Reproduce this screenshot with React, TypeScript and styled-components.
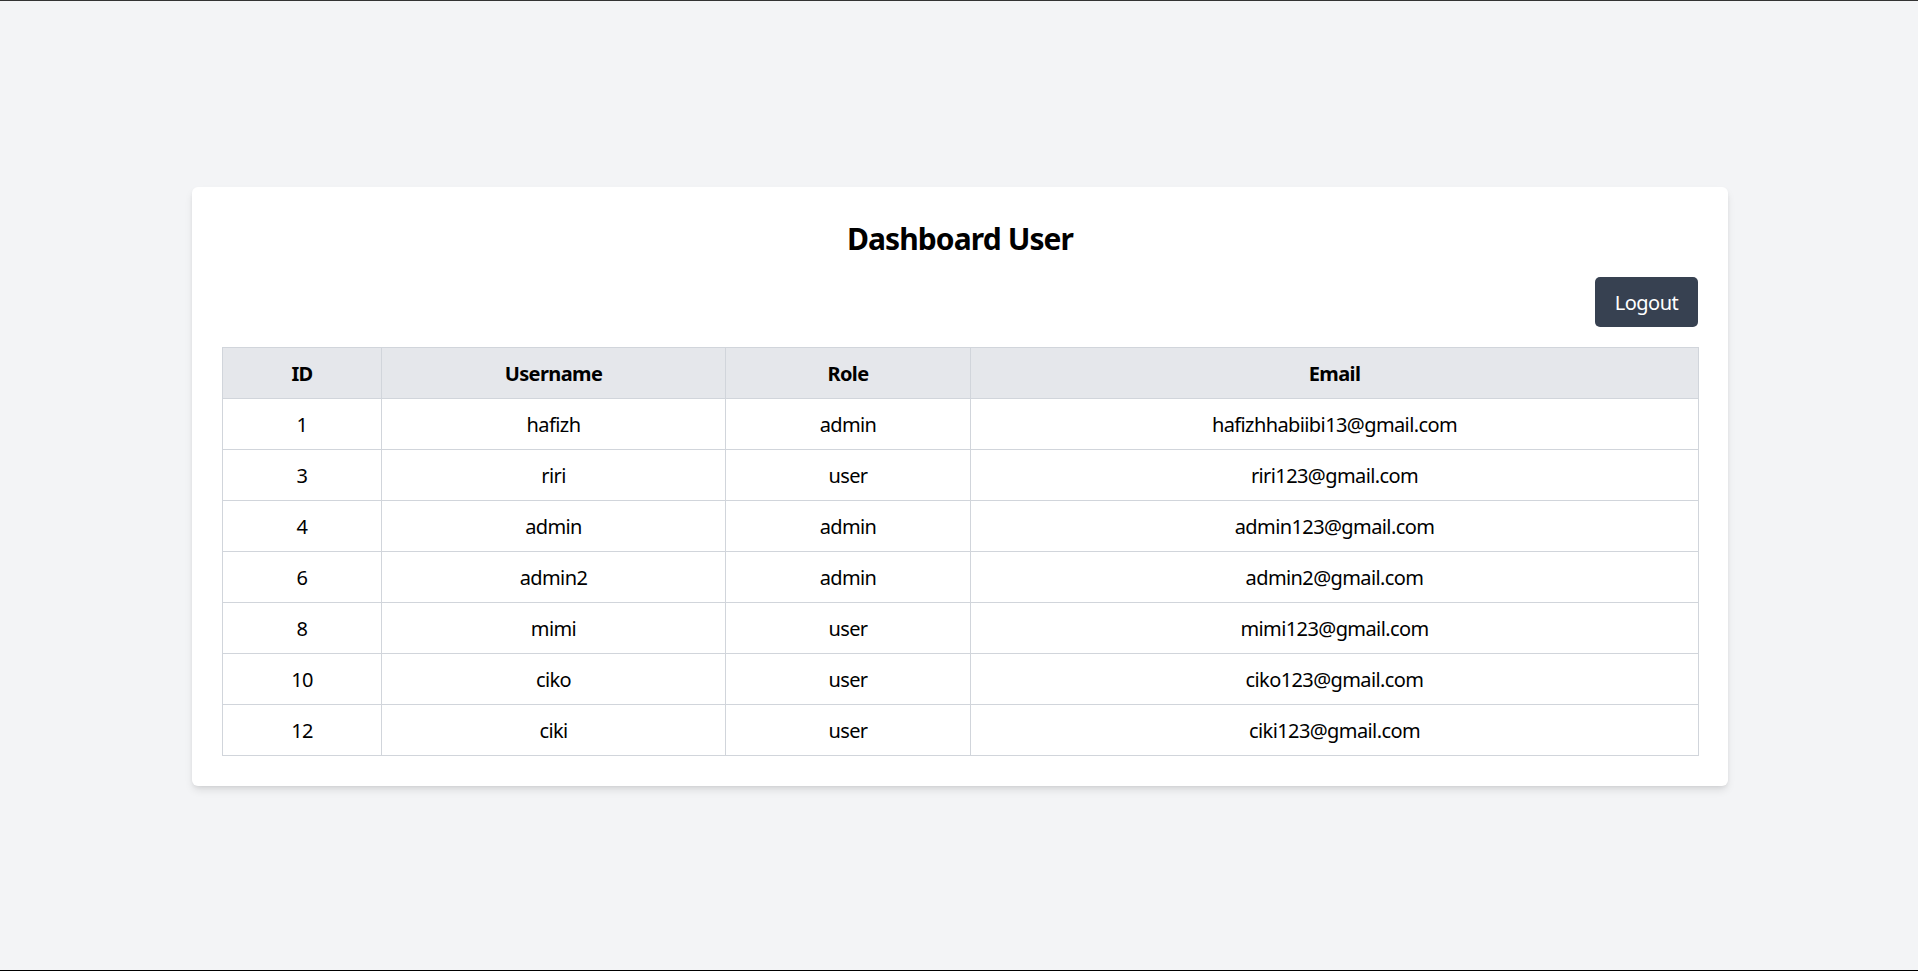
import styled, { createGlobalStyle } from "styled-components";

type User = {
  id: number;
  username: string;
  role: string;
  email: string;
};

const users: User[] = [
  { id: 1, username: "hafizh", role: "admin", email: "hafizhhabiibi13@gmail.com" },
  { id: 3, username: "riri", role: "user", email: "riri123@gmail.com" },
  { id: 4, username: "admin", role: "admin", email: "admin123@gmail.com" },
  { id: 6, username: "admin2", role: "admin", email: "admin2@gmail.com" },
  { id: 8, username: "mimi", role: "user", email: "mimi123@gmail.com" },
  { id: 10, username: "ciko", role: "user", email: "ciko123@gmail.com" },
  { id: 12, username: "ciki", role: "user", email: "ciki123@gmail.com" },
];

const columns = [
  { label: "ID", width: 159 },
  { label: "Username", width: 344 },
  { label: "Role", width: 245 },
  { label: "Email", width: 728 },
];

export default function App() {
  return (
    <>
      <GlobalStyle />
      <Page>
        <Card>
          <Title>Dashboard User</Title>
          <Toolbar>
            <LogoutButton type="button">Logout</LogoutButton>
          </Toolbar>
          <Table>
            <colgroup>
              {columns.map((c) => (
                <col key={c.label} style={{ width: c.width }} />
              ))}
            </colgroup>
            <thead>
              <tr>
                {columns.map((c) => (
                  <Th key={c.label}>{c.label}</Th>
                ))}
              </tr>
            </thead>
            <tbody>
              {users.map((u) => (
                <tr key={u.id}>
                  <Td>{u.id}</Td>
                  <Td>{u.username}</Td>
                  <Td>{u.role}</Td>
                  <Td>{u.email}</Td>
                </tr>
              ))}
            </tbody>
          </Table>
        </Card>
      </Page>
    </>
  );
}

const GlobalStyle = createGlobalStyle`
  * {
    box-sizing: border-box;
  }
  body {
    margin: 0;
    font-family: "Noto Sans", "Open Sans", sans-serif;
    color: #000;
    background: #f3f4f6;
  }
`;

const Page = styled.div`
  min-height: 100vh;
  display: flex;
  align-items: center;
  justify-content: center;
  background: #f3f4f6;
  border-top: 1px solid #333;
  border-bottom: 1px solid #000;
`;

const Card = styled.div`
  width: 1536px;
  margin: 2px 0 0 2px;
  background: #fff;
  border-radius: 6px;
  padding: 30px;
  box-shadow: 0 5px 8px -1px rgba(0, 0, 0, 0.1), 0 2px 5px -2px rgba(0, 0, 0, 0.1);
`;

const Title = styled.h1`
  margin: 0 0 20px;
  padding-top: 2px;
  height: 40px;
  font-size: 30px;
  line-height: 40px;
  font-weight: 700;
  letter-spacing: -0.9px;
  text-align: center;
`;

const Toolbar = styled.div`
  display: flex;
  justify-content: flex-end;
  margin-bottom: 20px;
`;

const LogoutButton = styled.button`
  width: 103px;
  height: 50px;
  padding: 2px 0 0;
  border: none;
  border-radius: 5px;
  background: #374151;
  color: #fff;
  font-family: inherit;
  font-size: 20px;
  line-height: 30px;
  letter-spacing: -0.5px;
  cursor: pointer;
`;

const Table = styled.table`
  width: 100%;
  border-collapse: collapse;
  table-layout: fixed;
  border: 1px solid #d1d5db;
`;

const Th = styled.th`
  background: #e5e7eb;
  border: 1px solid #d1d5db;
  padding: 11px 16px 9px;
  font-size: 20px;
  line-height: 30px;
  font-weight: 700;
  letter-spacing: -0.6px;
  text-align: center;
`;

const Td = styled.td`
  border: 1px solid #d1d5db;
  padding: 11px 16px 9px;
  font-size: 20px;
  line-height: 30px;
  letter-spacing: -0.6px;
  text-align: center;
`;
